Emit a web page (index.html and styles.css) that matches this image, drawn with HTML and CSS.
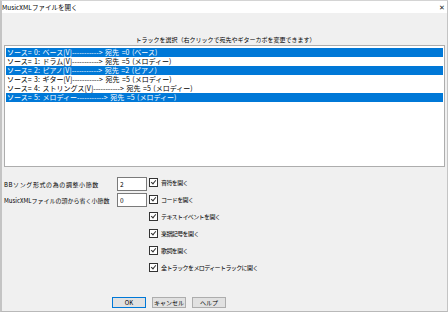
FILE: index.html
```html
<!DOCTYPE html>
<html>

<head>
  <title>MusicXMLファイルを開く</title>
  <link rel="stylesheet" href="styles.css">
</head>

<body>
  <div class="window">
    <div class="titlebar">
      <span class="title">MusicXMLファイルを開く</span>
      <span class="close">✕</span>
    </div>

    <div class="content">
      <div class="caption">トラックを選択（右クリックで宛先やギターカポを変更できます）</div>

      <ul class="tracks">
        <li class="sel">ソース= 0: ベース[V]-----------&gt; 宛先 =0 (ベース)</li>
        <li>ソース= 1: ドラム[V]-----------&gt; 宛先 =5 (メロディー)</li>
        <li class="sel">ソース= 2: ピアノ[V]-----------&gt; 宛先 =2 (ピアノ)</li>
        <li>ソース= 3: ギター[V]-----------&gt; 宛先 =5 (メロディー)</li>
        <li>ソース= 4: ストリングス[V]-----------&gt; 宛先 =5 (メロディー)</li>
        <li class="sel">ソース= 5: メロディー-----------&gt; 宛先 =5 (メロディー)</li>
      </ul>

      <div class="options">
        <div class="fields">
          <div class="field">
            <label class="wide">BBソング形式の為の調整小節数</label>
            <input class="num" value="2">
          </div>
          <div class="field">
            <label>MusicXMLファイルの頭から省く小節数</label>
            <input class="num" value="0">
          </div>
        </div>
        <div class="checks">
          <label class="check"><span class="box"></span>音符を開く</label>
          <label class="check"><span class="box"></span>コードを開く</label>
          <label class="check"><span class="box"></span>テキストイベントを開く</label>
          <label class="check"><span class="box"></span>楽譜記号を開く</label>
          <label class="check"><span class="box"></span>歌詞を開く</label>
          <label class="check"><span class="box"></span>全トラックをメロディートラックに開く</label>
        </div>
      </div>

      <div class="buttons">
        <button class="default">OK</button>
        <button>キャンセル</button>
        <button>ヘルプ</button>
      </div>
    </div>
  </div>
</body>

</html>
```

FILE: styles.css
```css
body { margin: 0; font-family: "Noto Sans CJK JP", "Noto Sans", sans-serif; font-size: 6px; color: #000; }

.window {
  width: 448px;
  height: 312px;
  box-sizing: border-box;
  border-top: 1px solid #d4d4d4;
  border-left: 2px solid #c4c4c4;
  border-right: 1px solid #c4c4c4;
  border-bottom: 1px solid #b9b9b9;
  background: #f0f0f0;
  display: flex;
  flex-direction: column;
}

.titlebar {
  height: 12px;
  background: #fff;
  display: flex;
  align-items: center;
  justify-content: space-between;
  padding: 0 2px 0 0;
}
.title { font-size: 6.5px; line-height: 10px; }
.close { font-size: 7px; color: #222; line-height: 8px; }

.content { padding: 0 2px 0 2px; flex: 1; display: flex; flex-direction: column; }

.caption { text-align: center; margin-top: 22px; height: 10px; line-height: 10px; padding-left: 2px; }

.tracks {
  list-style: none;
  margin: 0;
  padding: 2px 1px;
  height: 122px;
  box-sizing: border-box;
  background: #fff;
  border: 1px solid #adadad;
}
.tracks li { height: 9px; line-height: 9px; padding-left: 1px; white-space: pre; font-size: 7px; word-spacing: 1px; }
.tracks li.sel { background: #0078d7; color: #fff; }

.options { display: flex; margin-top: 8px; }
.fields { width: 143px; display: flex; flex-direction: column; gap: 2px; padding-top: 2px; font-size: 6px; }
.field { display: flex; align-items: center; justify-content: space-between; height: 14px; white-space: nowrap; }
.field .wide { letter-spacing: 0.6px; }
.num {
  width: 30px;
  height: 14px;
  box-sizing: border-box;
  border: 1px solid #7a7a7a;
  font: inherit;
  font-size: 6.5px;
  padding: 0 2px;
  margin: 0;
}

.checks { display: flex; flex-direction: column; padding-left: 2px; margin-top: -1px; letter-spacing: -0.6px; }
.check { display: flex; align-items: center; height: 17px; gap: 3px; }
.box {
  width: 7px;
  height: 7px;
  border: 1px solid #333;
  background: #fff;
  position: relative;
}
.box::after {
  content: "";
  position: absolute;
  left: 2px;
  top: 0px;
  width: 2px;
  height: 4px;
  border: solid #333;
  border-width: 0 1px 1px 0;
  transform: rotate(40deg);
}

.buttons { display: flex; gap: 6px; margin-top: auto; margin-bottom: 3px; padding-left: 108px; }
.buttons button {
  width: 34px;
  height: 11px;
  padding: 0;
  font: inherit;
  font-size: 6px;
  line-height: 9px;
  background: #e1e1e1;
  border: 1px solid #adadad;
}
.buttons button.default { border-color: #0078d7; }
```
